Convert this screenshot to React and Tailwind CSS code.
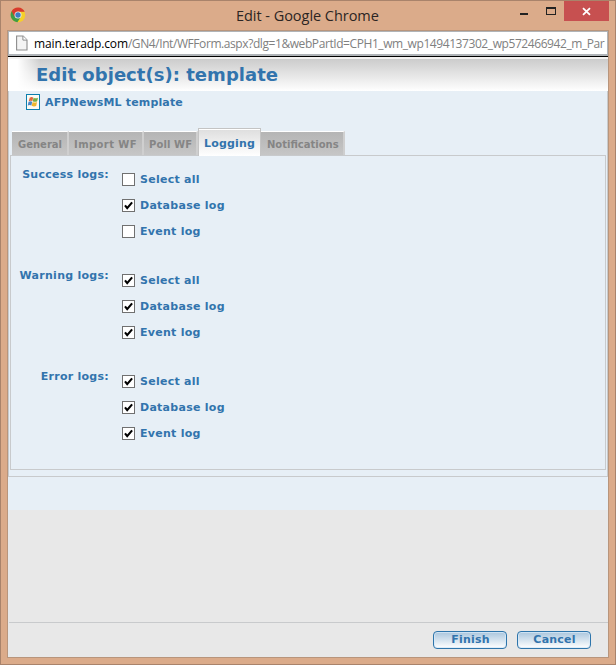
import React from "react";

const groups = [
  { label: "Success logs:", checks: [false, true, false] },
  { label: "Warning logs:", checks: [true, true, true] },
  { label: "Error logs:", checks: [true, true, true] },
];
const options = ["Select all", "Database log", "Event log"];

function ChromeIcon() {
  return (
    <svg className="h-4 w-4" viewBox="0 0 16 16">
      <circle cx="8" cy="8" r="7.3" fill="#f5cf2a" />
      <path d="M8 8 1.6 4.2A7.4 7.4 0 0 0 7.4 15.3L11 9.7Z" fill="#3f9c46" />
      <path d="M8 8 4.4 9.6 1.6 4.2A7.4 7.4 0 0 1 14.7 4.7H8Z" fill="#d83a2e" />
      <circle cx="8" cy="8" r="3.5" fill="#f3efe6" />
      <circle cx="8" cy="8" r="2.7" fill="#3f7cc4" />
    </svg>
  );
}

function PageIcon() {
  return (
    <svg className="h-4 w-3" viewBox="0 0 12 16">
      <path d="M.6 1H7.1L11 4.9V15H.6Z" fill="#f4f4f4" stroke="#8d8d8d" strokeWidth="1.1" />
      <path d="M6.9 1V5.1H11" fill="#fff" stroke="#8d8d8d" />
    </svg>
  );
}

function TemplateIcon() {
  return (
    <svg className="h-4 w-3.5" viewBox="0 0 14 16">
      <rect x=".5" y=".5" width="13" height="15" fill="#fdfaf2" stroke="#0c7fae" />
      <path d="M3.7 3.7Q5.5 2.4 7.2 3.5L6.4 7.1Q4.4 6.1 2.7 7.3Z" fill="#e2683c" />
      <path d="M7.6 3.7Q9.3 4.9 12 3.7L11.2 7.3Q8.9 8.4 6.7 7.3Z" fill="#75ad45" />
      <path d="M2.5 7.9Q4.4 6.8 6.2 7.8L5.4 11.5Q3.6 10.6 1.7 11.6Z" fill="#4a85c8" />
      <path d="M6.6 8Q8.7 9.1 11 8L10.2 12Q7.8 13 5.7 11.8Z" fill="#edb52e" />
    </svg>
  );
}

function Check({ checked }) {
  return (
    <span className="mt-[6px] flex h-[13px] w-[13px] items-center justify-center border border-[#707070] bg-white">
      {checked && (
        <svg className="h-[11px] w-[11px]" viewBox="0 0 11 11">
          <path d="M2 5.4 4.2 8.2 9.1 2.4" fill="none" stroke="#000" strokeWidth="2.1" />
        </svg>
      )}
    </span>
  );
}

function Tab({ children, className }) {
  return (
    <div className={`${className} flex h-[24px] items-center whitespace-nowrap border-r-2 border-t border-r-[#cfcfcf] border-t-white bg-linear-to-b from-[#b5b5b5] to-[#c6c6c6] pt-[2px] text-[10px] text-[#858585]`}>
      {children}
    </div>
  );
}

function Button({ children }) {
  return (
    <button className="flex h-[18px] w-[74px] items-center justify-center rounded-[4px] border border-[#2e75ab] bg-linear-to-b from-[#aac6dd] to-white pl-px text-[11px] font-bold tracking-[0.2px] text-[#3274ad] shadow-[inset_0_0_0_1px_rgba(215,233,247,0.8)]">
      {children}
    </button>
  );
}

export default function App() {
  return (
    <div className="flex h-[665px] w-[616px] flex-col overflow-hidden border border-[#a9836b] bg-[#dbab8a] px-[6px] pb-[6px] font-['DejaVu_Sans',Verdana,sans-serif]">
      <header className="flex h-[29px] shrink-0 items-start">
        <div className="w-[229px] pl-[3px] pt-[6px]"><ChromeIcon /></div>
        <h1 className="w-[200px] whitespace-nowrap pt-[5px] font-['Open_Sans','Noto_Sans',sans-serif] text-[14.5px] leading-5 tracking-[-0.04px] text-[#2b2523]">Edit - Google Chrome</h1>
        <div className="flex w-[128px] justify-between pl-[84px] pr-[8px] pt-[6px]">
          <span className="mt-[6px] h-[2px] w-[8px] bg-[#222]" />
          <span className="h-[8px] w-[10px] border border-t-2 border-[#222]" />
        </div>
        <button className="flex h-[20px] w-[45px] items-center justify-center bg-[#c75050]">
          <svg className="h-[9px] w-[9px]" viewBox="0 0 9 9"><path d="M1 1.2 8 7.8M8 1.2 1 7.8" stroke="#fff" strokeWidth="1.8" /></svg>
        </button>
      </header>
      <div className="flex h-[628px] shrink-0 flex-col border border-[#b8957c] bg-[#e8e8e8]">
        <div className="flex h-[25px] shrink-0 items-center overflow-hidden border-b-2 border-l border-r border-t border-[#b0b4b8] bg-white pl-[7px]">
          <PageIcon />
          <div className="ml-[6px] whitespace-nowrap pt-[2px] font-['Open_Sans','Noto_Sans',sans-serif] text-[12px] leading-[20px] tracking-[-0.42px] text-[#808080]">
            <span className="tracking-[-0.13px] text-black">main.teradp.com</span>/GN4/Int/WFForm.aspx?dlg=1&amp;webPartId=CPH1_wm_wp1494137302_wp572466942_m_Par
          </div>
        </div>
        <div className="h-px shrink-0 bg-black" />
        <div className="h-[2px] shrink-0 bg-[#f4f2f1]" />
        <div className="relative h-[32px] shrink-0 bg-linear-to-b from-[#cccccc] to-white pl-7">
          <div className="absolute left-0 top-0 h-full w-8 bg-linear-to-r from-white from-30% to-transparent" />
          <h2 className="relative whitespace-nowrap text-[18px] font-bold leading-[31px] tracking-[0.03px] text-[#3274ad]">Edit object(s): template</h2>
        </div>
        <div className="flex h-[419px] shrink-0 flex-col bg-[#e7eff6] font-bold text-[#3274ad]">
          <div className="flex h-[386px] flex-col border-b border-l border-r border-[#c8cacc] pb-[6px] pl-px pr-px">
            <div className="flex h-[20px] shrink-0 items-start gap-[5px] pl-4 pt-[3px] text-[11px] tracking-[0.15px]">
              <TemplateIcon />
              <span className="pt-px leading-[16px]">AFPNewsML template</span>
            </div>
            <div className="mt-[16px] flex h-[28px] shrink-0 items-end pl-[2px]">
              <Tab className="w-[57px] pl-[6px]">General</Tab>
              <Tab className="w-[75px] pl-[5px] tracking-[0.42px]">Import WF</Tab>
              <Tab className="w-[54px] pl-[5px] tracking-[0.1px]">Poll WF</Tab>
              <div className="z-10 -mb-px flex h-[28px] w-[63px] items-center border-l border-r border-t border-[#c4c4c4] bg-linear-to-b from-[#dedede] to-white pl-[5px] pt-[3px] text-[11px] tracking-[0.2px] shadow-[inset_0_1px_0_white]">Logging</div>
              <Tab className="w-[84px] pl-[6px]">Notifications</Tab>
            </div>
            <div className="flex flex-1 flex-col gap-[23px] border border-[#c8cacc] pl-[9px] pt-[11px] text-[11px] tracking-[0.27px]">
              {groups.map((g) => (
                <section key={g.label} className="flex h-[78px] gap-[13px]">
                  <div className="flex w-[89px] justify-end whitespace-nowrap leading-[16px]">{g.label}</div>
                  <div>
                    {options.map((o, i) => (
                      <label key={o} className="flex h-[26px] items-start gap-[5px] whitespace-nowrap">
                        <Check checked={g.checks[i]} />
                        <span className="pt-[5px] leading-[16px]">{o}</span>
                      </label>
                    ))}
                  </div>
                </section>
              ))}
            </div>
          </div>
        </div>
        <div className="flex-1" />
        <footer className="ml-px flex h-[35px] shrink-0 justify-end gap-[10px] border-t border-[#c8cacc] pr-[17px] pt-[8px]">
          <Button>Finish</Button>
          <Button>Cancel</Button>
        </footer>
      </div>
    </div>
  );
}
